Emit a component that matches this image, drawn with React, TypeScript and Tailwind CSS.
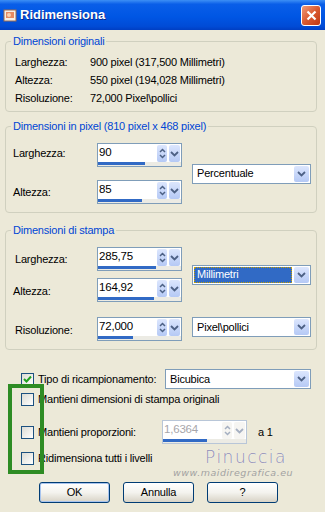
import React from "react";

const Chevron = () => (
  <svg width="9" height="6" viewBox="0 0 9 6">
    <path d="M1 1 L4.5 4.5 L8 1" fill="none" stroke="#4D6185" strokeWidth="1.8" />
  </svg>
);

const UpDown = () => (
  <svg width="7" height="11" viewBox="0 0 7 11">
    <path d="M1 4 L3.5 1.5 L6 4" fill="none" stroke="#4D6185" strokeWidth="1.5" />
    <path d="M1 7 L3.5 9.5 L6 7" fill="none" stroke="#4D6185" strokeWidth="1.5" />
  </svg>
);

const SpinBtn = ({ w, disabled, children }: { w: string; disabled?: boolean; children: React.ReactNode }) => (
  <div
    className={`${w} flex items-center justify-center rounded-[2px] ${
      disabled ? "bg-[#EEEDE6] opacity-50" : "bg-gradient-to-b from-[#DCE6FD] to-[#B5C9F5]"
    }`}
  >
    {children}
  </div>
);

const Spin = ({ value, fill, disabled }: { value: string; fill: number; disabled?: boolean }) => (
  <div
    className={`w-[85px] h-[24px] border bg-white flex flex-col ${
      disabled ? "border-[#B8C6D8]" : "border-[#7F9DB9]"
    }`}
  >
    <div className="h-[18px] flex items-stretch pt-[1px] pr-[1px] gap-[2px]">
      <span className={`flex-1 pl-[1px] leading-[15px] text-[11.5px] ${disabled ? "text-[#A7A6AA]" : ""}`}>
        {value}
      </span>
      <SpinBtn w="w-[10px]" disabled={disabled}>
        <UpDown />
      </SpinBtn>
      <SpinBtn w="w-[11px]" disabled={disabled}>
        <Chevron />
      </SpinBtn>
    </div>
    <div className="h-[4px] mt-auto bg-[#ECEBE4]">
      <div className="h-[3px] bg-[#316AC5]" style={{ width: fill }} />
    </div>
  </div>
);

const Combo = ({ text, w, selected }: { text: string; w: string; selected?: boolean }) => (
  <div className={`${w} h-[20px] border border-[#7F9DB9] bg-white flex items-stretch p-[1px] gap-[2px]`}>
    <div
      className={`flex-1 flex items-center pl-[3px] ${
        selected ? "bg-[#316AC5] text-white outline-1 outline-dotted outline-[#C8A000] -outline-offset-1" : ""
      }`}
    >
      {text}
    </div>
    <SpinBtn w="w-[15px]">
      <Chevron />
    </SpinBtn>
  </div>
);

const Check = ({ checked }: { checked?: boolean }) => (
  <span className="w-[13px] h-[13px] border border-[#1C5180] bg-gradient-to-br from-[#DCDCD4] to-white flex items-center justify-center shrink-0">
    {checked && (
      <svg width="9" height="9" viewBox="0 0 9 9">
        <path d="M1 4 L3.5 6.5 L8 1.5" stroke="#21A121" strokeWidth="2" fill="none" />
      </svg>
    )}
  </span>
);

const Group = ({ title, children, className }: { title: string; children: React.ReactNode; className?: string }) => (
  <fieldset className={`border border-[#D0D0BF] rounded-[4px] px-[5px] ${className ?? ""}`}>
    <legend className="px-[2px] text-[#0046D5] leading-[13px]">{title}</legend>
    {children}
  </fieldset>
);

const Button = ({ label, primary }: { label: string; primary?: boolean }) => (
  <button
    className={`w-[71px] h-[21px] rounded-[3px] border border-[#003C74] bg-gradient-to-b from-white via-[#F4F3EE] to-[#D8D3C6] ${
      primary ? "shadow-[inset_0_0_0_1px_#A8C4EE]" : ""
    }`}
  >
    {label}
  </button>
);

export default function App() {
  return (
    <div className="w-[325px] h-[512px] bg-[#ECE9D8] text-black relative overflow-hidden font-['Liberation_Sans',Arial,sans-serif] text-[11px] tracking-[-0.2px]">
      {/* title bar */}
      <div className="h-[30px] flex items-center justify-between pl-[3px] pr-[4px] tracking-normal bg-[linear-gradient(180deg,#3D8FF5_0%,#0A5EE8_14%,#0056E4_55%,#004BD6_88%,#003EC2_100%)]">
        <div className="flex items-center gap-[3px]">
          <svg width="14" height="14" viewBox="0 0 14 14">
            <rect x="1" y="2" width="12" height="11" fill="#F6EFE6" stroke="#9A6A50" strokeWidth="1" />
            <rect x="3" y="4" width="8" height="6" fill="#E58A62" />
            <circle cx="6" cy="7" r="2" fill="#F9D2B0" />
          </svg>
          <span className="text-white font-bold text-[13px] [text-shadow:1px_1px_0_#0A2A8C]">Ridimensiona</span>
        </div>
        <div className="w-[20px] h-[21px] rounded-[3px] border border-white bg-gradient-to-br from-[#EE9A78] via-[#DA5A30] to-[#C0360E] flex items-center justify-center">
          <svg width="11" height="11" viewBox="0 0 11 11">
            <path d="M1.5 1.5 L9.5 9.5 M9.5 1.5 L1.5 9.5" stroke="white" strokeWidth="2.2" />
          </svg>
        </div>
      </div>

      <div className="pl-[5px] pr-[8px] pt-[5px]">
        <Group title="Dimensioni originali" className="pb-[4px]">
          <div className="pt-[5px] pl-[4px] flex flex-col">
            {[
              ["Larghezza:", "900 pixel (317,500 Millimetri)"],
              ["Altezza:", "550 pixel (194,028 Millimetri)"],
              ["Risoluzione:", "72,000 Pixel\\pollici"],
            ].map(([k, v]) => (
              <div key={k} className="flex h-[18px] items-center">
                <span className="w-[75px]">{k}</span>
                <span>{v}</span>
              </div>
            ))}
          </div>
        </Group>

        <Group title="Dimensioni in pixel (810 pixel x 468 pixel)" className="mt-[8px] pt-[10px] pb-[8px]">
          <div className="flex items-center pl-[2px] gap-[10px]">
            <div className="flex flex-col gap-[13px]">
              <div className="flex items-center">
                <span className="w-[84px] -mt-[3px]">Larghezza:</span>
                <Spin value="90" fill={47} />
              </div>
              <div className="flex items-center">
                <span className="w-[84px]">Altezza:</span>
                <Spin value="85" fill={44} />
              </div>
            </div>
            <Combo text="Percentuale" w="w-[119px]" />
          </div>
        </Group>

        <Group title="Dimensioni di stampa" className="mt-[11px] pt-[10px] pb-[8px]">
          <div className="flex items-center pl-[2px] gap-[10px]">
            <div className="flex flex-col gap-[7px]">
              <div className="flex items-center">
                <span className="w-[84px] pl-[2px]">Larghezza:</span>
                <Spin value="285,75" fill={58} />
              </div>
              <div className="flex items-center">
                <span className="w-[84px] pt-[3px]">Altezza:</span>
                <Spin value="164,92" fill={56} />
              </div>
            </div>
            <Combo text="Millimetri" w="w-[119px]" selected />
          </div>
          <div className="flex items-start pl-[2px] gap-[10px] mt-[15px]">
            <div className="flex items-center">
              <span className="w-[84px] pl-[2px] pt-[2px]">Risoluzione:</span>
              <Spin value="72,000" fill={35} />
            </div>
            <Combo text="Pixel\pollici" w="w-[119px]" />
          </div>
        </Group>

        <div className="relative pl-[16px] mt-[19px]">
          <div className="flex items-center h-[20px]">
            <div className="w-[144px] flex items-center gap-[4px]">
              <Check checked />
              <span>Tipo di ricampionamento:</span>
            </div>
            <Combo text="Bicubica" w="w-[146px]" />
          </div>
          <div className="flex items-center h-[20px] gap-[4px]">
            <Check />
            <span>Mantieni dimensioni di stampa originali</span>
          </div>
          <div className="flex items-center h-[24px] mt-[11px]">
            <div className="w-[141px] flex items-center gap-[4px]">
              <Check />
              <span>Mantieni proporzioni:</span>
            </div>
            <Spin value="1,6364" fill={44} disabled />
            <span className="ml-[11px]">a 1</span>
          </div>
          <div className="flex items-center h-[20px] mt-[4px] gap-[4px]">
            <Check />
            <span>Ridimensiona tutti i livelli</span>
          </div>

          {/* annotation + watermark overlays */}
          <div className="absolute left-[3px] top-[15px] w-[36px] h-[90px] border-[4px] border-[#2E8C24]" />
          <div className="absolute left-[200px] top-[79px] text-[17px] leading-[18px] tracking-[1.5px] text-[#8E8CB4] font-['DejaVu_Sans',sans-serif] font-light [text-shadow:0_0_1px_#fff]">
            Pinuccia
          </div>
          <div className="absolute left-[168px] top-[99px] text-[9.5px] leading-[10px] tracking-[0.5px] text-[#A2A2A2] font-['DejaVu_Sans',sans-serif] italic">
            www.maidiregrafica.eu
          </div>
        </div>

        <div className="flex gap-[13px] pl-[34px] mt-[14px]">
          <Button label="OK" primary />
          <Button label="Annulla" />
          <Button label="?" />
        </div>
      </div>
    </div>
  );
}
